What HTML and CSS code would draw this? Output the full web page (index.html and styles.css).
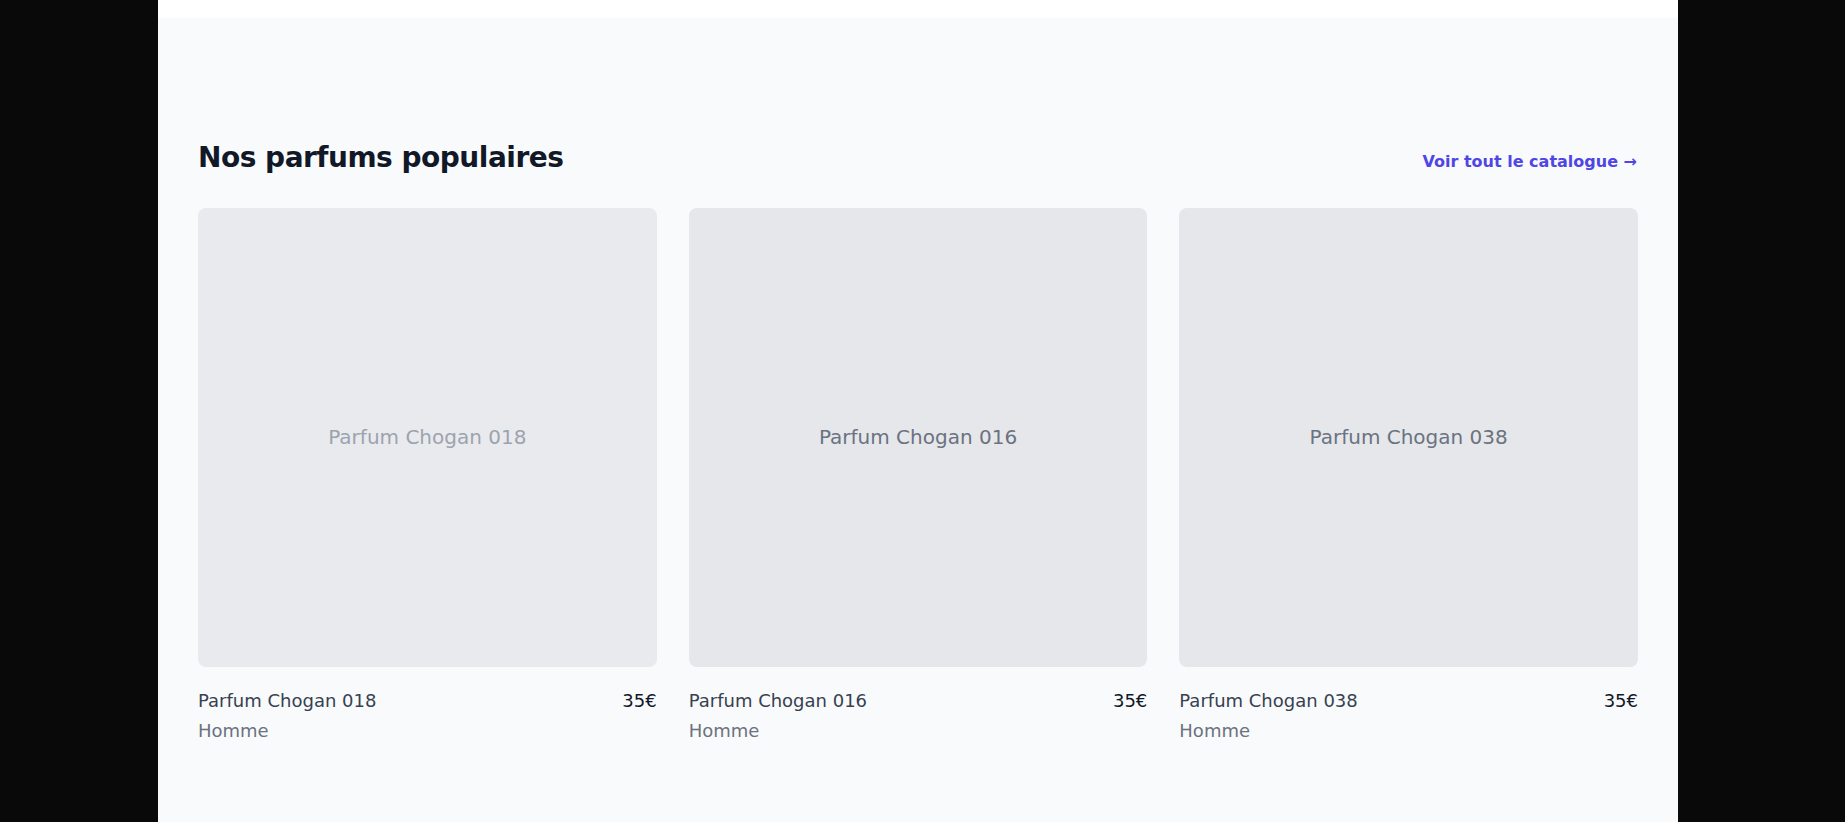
FILE: index.html
```html
<!DOCTYPE html>
<html lang="fr">
<head>
<meta charset="utf-8">
<title>Nos parfums populaires</title>
<link rel="stylesheet" href="styles.css">
</head>
<body>
<div class="page">
  <div class="topbar"></div>
  <section class="popular">
    <div class="popular-head">
      <h2 class="popular-title">Nos parfums populaires</h2>
      <a class="popular-link" href="#">Voir tout le catalogue →</a>
    </div>
    <div class="grid">
      <article class="card">
        <div class="card-img card-img--faded"><span class="card-img-label">Parfum Chogan 018</span></div>
        <div class="card-row"><span class="card-name">Parfum Chogan 018</span><span class="card-price">35€</span></div>
        <div class="card-cat">Homme</div>
      </article>
      <article class="card">
        <div class="card-img"><span class="card-img-label">Parfum Chogan 016</span></div>
        <div class="card-row"><span class="card-name">Parfum Chogan 016</span><span class="card-price">35€</span></div>
        <div class="card-cat">Homme</div>
      </article>
      <article class="card">
        <div class="card-img"><span class="card-img-label">Parfum Chogan 038</span></div>
        <div class="card-row"><span class="card-name">Parfum Chogan 038</span><span class="card-price">35€</span></div>
        <div class="card-cat">Homme</div>
      </article>
    </div>
  </section>
</div>
</body>
</html>
```

FILE: styles.css
```css
html, body {
  margin: 0;
  padding: 0;
  height: 100%;
}
body {
  background: #090909;
  font-family: "DejaVu Sans", "Liberation Sans", sans-serif;
  overflow: hidden;
}
.page {
  width: 1520px;
  margin-left: 158px;
  height: 100%;
  display: flex;
  flex-direction: column;
}
.topbar {
  height: 18px;
  background: #ffffff;
  flex: none;
}
.popular {
  flex: 1;
  background: #f9fafb;
  padding: 122px 40px 0;
}
.popular-head {
  display: flex;
  justify-content: space-between;
  align-items: baseline;
  margin-bottom: 32px;
}
.popular-title {
  margin: 0;
  font-size: 28px;
  line-height: 36px;
  font-weight: 700;
  letter-spacing: -0.5px;
  color: #111827;
}
.popular-link {
  font-size: 16px;
  line-height: 24px;
  font-weight: 700;
  color: #4f46e5;
  text-decoration: none;
  margin-right: 1px;
}
.grid {
  display: grid;
  grid-template-columns: repeat(3, 1fr);
  gap: 32px;
}
.card-img {
  aspect-ratio: 1 / 1;
  background: #e5e7eb;
  border-radius: 8px;
  display: flex;
  align-items: center;
  justify-content: center;
}
.card-img--faded {
  background: #e9eaee;
}
.card-img-label {
  font-size: 20px;
  color: #6b7280;
}
.card-img--faded .card-img-label {
  color: #9ca3af;
}
.card-row {
  display: flex;
  justify-content: space-between;
  align-items: baseline;
  margin-top: 20px;
  font-size: 18px;
  line-height: 28px;
}
.card-name {
  color: #374151;
}
.card-price {
  color: #111827;
}
.card-cat {
  margin-top: 2px;
  font-size: 18px;
  line-height: 28px;
  color: #6b7280;
}
```
